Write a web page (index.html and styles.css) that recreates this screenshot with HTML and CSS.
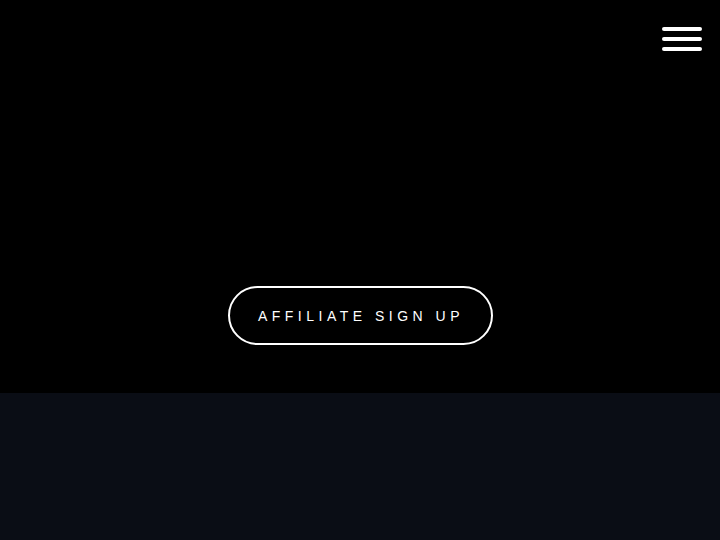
FILE: index.html
```html
<!DOCTYPE html>
<html lang="en">
<head>
    <meta charset="UTF-8">
    <meta name="viewport" content="width=device-width, initial-scale=1.0">
    <title>Affiliate</title>
    <link rel="stylesheet" href="styles.css">
</head>
<body>
    <header class="hero">
        <button class="menu-toggle" aria-label="Menu">
            <span></span>
            <span></span>
            <span></span>
        </button>
        <a class="signup-btn" href="#">AFFILIATE SIGN UP</a>
    </header>
    <section class="content"></section>
</body>
</html>
```

FILE: styles.css
```css
body {
    margin: 0;
    font-family: "Liberation Sans", Arial, sans-serif;
    background-color: #0a0d15;
}
.hero {
    position: relative;
    height: 393px;
    background-color: #000000;
    display: flex;
    justify-content: center;
    align-items: flex-start;
    padding-top: 286px;
    box-sizing: border-box;
}
.menu-toggle {
    position: absolute;
    top: 27px;
    right: 18px;
    width: 40px;
    padding: 0;
    border: none;
    background: none;
    display: flex;
    flex-direction: column;
    gap: 6px;
    cursor: pointer;
}
.menu-toggle span {
    display: block;
    height: 4px;
    background-color: #ffffff;
    border-radius: 2px;
}
.signup-btn {
    display: inline-flex;
    align-items: center;
    justify-content: center;
    width: 265px;
    height: 59px;
    box-sizing: border-box;
    border: 2px solid #ffffff;
    border-radius: 30px;
    color: #ffffff;
    text-decoration: none;
    font-size: 14px;
    letter-spacing: 4.5px;
    padding-left: 2px;
}
.content {
    height: 147px;
    background-color: #0a0d15;
}
```
